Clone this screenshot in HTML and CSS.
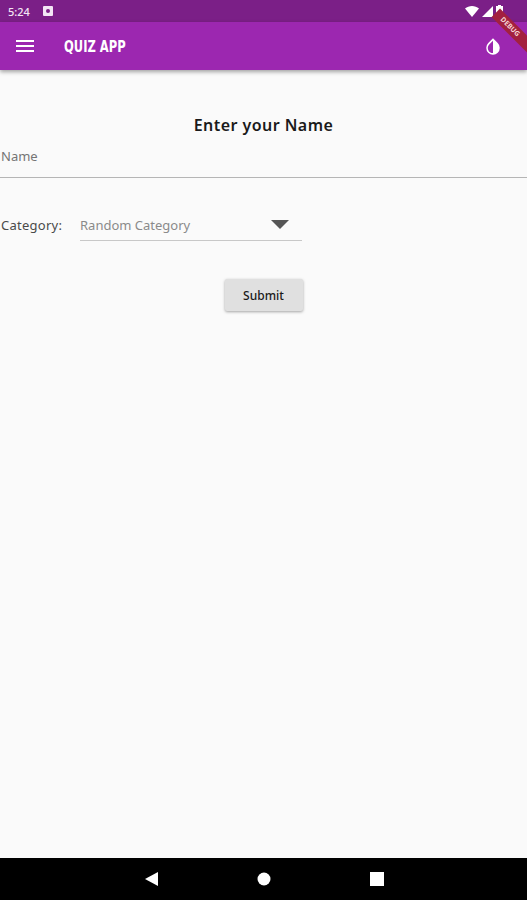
FILE: index.html
```html
<!DOCTYPE html>
<html lang="en">
<head>
  <meta charset="UTF-8">
  <title>Quiz App</title>
  <meta name="viewport" content="width=device-width, initial-scale=1.0">
  <link rel="stylesheet" href="styles.css">
</head>
<body>
  <div class="phone">
    <div class="status-bar">
      <div class="status-left">
        <span class="clock">5:24</span>
        <svg class="status-dot" width="10" height="10" viewBox="0 0 10 10"><path fill="#f3e5f5" d="M1 0h8a1 1 0 0 1 1 1v8a1 1 0 0 1-1 1H1a1 1 0 0 1-1-1V1a1 1 0 0 1 1-1z"/><circle cx="5" cy="5" r="2" fill="#7b1f87"/></svg>
      </div>
      <div class="status-right">
        <svg width="14" height="11" viewBox="0 0 14 11"><path fill="#fff" d="M0 2.6C3.8-.8 10.200-.8 14 2.600L7 11z"/></svg>
        <svg width="11" height="11" viewBox="0 0 11 11"><path fill="#fff" d="M11 0v11H0z"/></svg>
        <svg width="7" height="12" viewBox="0 0 7 12"><path fill="#fff" d="M2 0h3v1h2v11H0V1h2z"/></svg>
      </div>
    </div>

    <header class="app-bar">
      <svg class="menu-icon" width="18" height="12" viewBox="0 0 18 12"><path fill="#fff" d="M0 0h18v2H0zM0 5h18v2H0zM0 10h18v2H0z"/></svg>
      <span class="app-title">QUIZ APP</span>
      <svg class="drop-icon" width="14" height="17" viewBox="0 0 16 19"><path fill="#fff" fill-rule="evenodd" d="M8 0l5.400 5.600a7.700 7.700 0 1 1-10.800 0zM8 3L3.900 7a5.800 5.800 0 0 0 4.100 10z"/></svg>
    </header>

    <div class="debug-ribbon">DEBUG</div>

    <main class="content">
      <h2 class="heading">Enter your Name</h2>
      <div class="name-field">Name</div>

      <div class="category-row">
        <span class="category-label">Category:</span>
        <div class="dropdown">
          <span>Random Category</span>
          <span class="dropdown-arrow"></span>
        </div>
      </div>

      <div class="actions">
        <button class="submit-btn">Submit</button>
      </div>
    </main>

    <nav class="nav-bar">
      <svg width="13" height="14" viewBox="0 0 13 14"><path fill="#fff" d="M13 0v14L0 7z"/></svg>
      <svg width="14" height="14" viewBox="0 0 14 14"><circle cx="7" cy="7" r="6.500" fill="#fff"/></svg>
      <svg width="14" height="14" viewBox="0 0 14 14"><path fill="#fff" d="M0 0h14v14H0z"/></svg>
    </nav>
  </div>
</body>
</html>
```

FILE: styles.css
```css
* {
  box-sizing: border-box;
}

body {
  margin: 0;
  font-family: 'Noto Sans', sans-serif;
  background-color: #fafafa;
  color: #333;
}

.phone {
  position: relative;
  width: 527px;
  height: 900px;
  overflow: hidden;
  display: flex;
  flex-direction: column;
}

.status-bar {
  height: 22px;
  background-color: #7b1f87;
  display: flex;
  justify-content: space-between;
  align-items: center;
  padding: 0 24px 0 8px;
  color: #f3e5f5;
}

.status-left {
  display: flex;
  align-items: center;
  gap: 13px;
}

.clock {
  font-size: 11px;
  font-weight: 500;
}

.status-right {
  display: flex;
  align-items: center;
  gap: 3px;
}

.app-bar {
  height: 48px;
  background-color: #9c27b0;
  display: flex;
  align-items: center;
  padding: 0 27px 0 16px;
  box-shadow: 0 2px 4px rgba(0, 0, 0, 0.35);
  position: relative;
}

.app-title {
  margin-left: 30px;
  color: #fff;
  font-family: 'DejaVu Sans Condensed', 'DejaVu Sans', sans-serif;
  font-size: 16px;
  font-weight: bold;
  transform: scaleX(0.8);
  transform-origin: left center;
}

.drop-icon {
  margin-left: auto;
}

.debug-ribbon {
  position: absolute;
  top: 28px;
  left: 487px;
  width: 60px;
  height: 12px;
  line-height: 12px;
  padding-left: 8px;
  background-color: #a3203f;
  color: #f5d5d5;
  font-size: 7px;
  font-weight: bold;
  transform: rotate(45deg);
}

.content {
  flex: 1;
  padding-top: 45px;
}

.heading {
  margin: 0;
  text-align: center;
  font-size: 16px;
  line-height: 20px;
  font-weight: 600;
  letter-spacing: 0.45px;
  color: #1a1a1a;
}

.name-field {
  margin-top: 12px;
  height: 31px;
  padding-left: 1px;
  border-bottom: 1px solid #b5b5b5;
  font-size: 13px;
  line-height: 18px;
  color: #757575;
}

.category-row {
  margin-top: 31px;
  display: flex;
  align-items: flex-end;
}

.category-label {
  width: 80px;
  padding-left: 1px;
  font-size: 13px;
  line-height: 32px;
  letter-spacing: 0.25px;
  color: #4a4a4a;
}

.dropdown {
  width: 222px;
  height: 32px;
  border-bottom: 1px solid #c8c8c8;
  display: flex;
  justify-content: space-between;
  align-items: center;
  padding-right: 13px;
  font-size: 13px;
  color: #8a8a8a;
}

.dropdown-arrow {
  width: 0;
  height: 0;
  border-left: 9px solid transparent;
  border-right: 9px solid transparent;
  border-top: 9px solid #555;
}

.actions {
  margin-top: 38px;
  display: flex;
  justify-content: center;
}

.submit-btn {
  width: 78px;
  height: 32px;
  border: none;
  border-radius: 2px;
  background-color: #e0e0e0;
  box-shadow: 0 1px 3px rgba(0, 0, 0, 0.35);
  font-family: inherit;
  font-size: 12px;
  font-weight: 500;
  color: #1a1a1a;
}

.nav-bar {
  height: 42px;
  background-color: #000;
  display: flex;
  justify-content: center;
  align-items: center;
  gap: 99px;
  padding-left: 1px;
}
```
